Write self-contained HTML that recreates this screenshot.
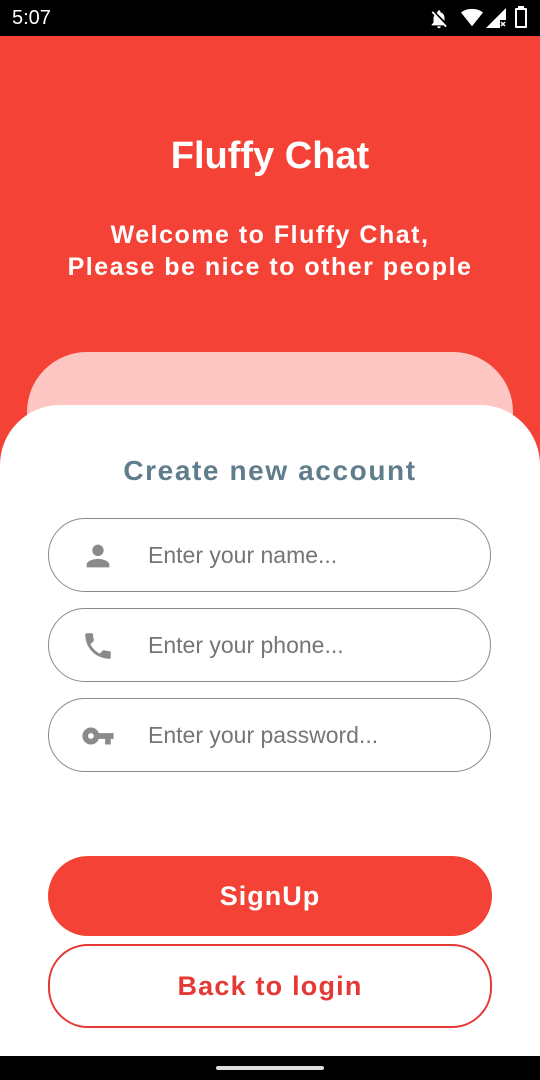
<!DOCTYPE html>
<html><head><meta charset="utf-8"><style>
*{margin:0;padding:0;box-sizing:border-box}
body{width:540px;height:1080px;position:relative;overflow:hidden;background:#f44336;font-family:"Liberation Sans",Roboto,sans-serif}
.sb{position:absolute;top:0;left:0;width:540px;height:36px;background:#000;color:#fff;font-size:20px}
.nav{position:absolute;bottom:0;left:0;width:540px;height:24px;background:#000}
.nav div{position:absolute;left:216px;top:10px;width:108px;height:4px;border-radius:2px;background:#ddd}
.t{position:absolute;width:540px;text-align:center;color:#fff}
.back{position:absolute;left:27px;top:352px;width:486px;height:200px;border-radius:60px;background:#fdc6c2}
.card{position:absolute;left:0;top:405px;width:540px;height:651px;border-radius:60px 60px 0 0;background:#fff}
.in{position:absolute;left:48px;width:443px;height:74px;border:1.3px solid #8a8a8a;border-radius:37px;color:#757575;font-size:23px;line-height:72px;padding-left:99px}
.in svg{position:absolute;left:30px;top:20px}
.btn{position:absolute;left:48px;width:444px;border-radius:40px;text-align:center;font-size:27px;font-weight:bold;letter-spacing:1px}
</style></head><body>
<div class="sb"><span style="position:absolute;left:12px;top:7px">5:07</span>
<svg style="position:absolute;left:428px;top:8px" width="22" height="22" viewBox="0 0 24 24"><path fill="#fff" d="M12 22c1.1 0 2-.9 2-2h-4c0 1.1.9 2 2 2zm6-6v-5c0-3-1.6-5.6-4.5-6.3V4c0-.8-.7-1.5-1.5-1.5S10.5 3.2 10.5 4v.7c-.5.1-1 .3-1.4.5L18 14v2zM5.4 3.5 4 4.9 7 7.9C6.4 8.8 6 9.9 6 11v5l-2 2v1h13.1l2 2 1.4-1.4z"/></svg>
<svg style="position:absolute;left:461px;top:8px" width="22" height="20" viewBox="0 0 24 20"><path fill="#fff" d="M12 19 0 4C3 1.5 7.3 0 12 0s9 1.5 12 4z"/></svg>
<svg style="position:absolute;left:486px;top:8px" width="20" height="20" viewBox="0 0 20 20"><path fill="#fff" d="M20 0v12h-6v8H0z"/><path stroke="#fff" stroke-width="1.5" d="M15 14l4 4M19 14l-4 4"/></svg>
<div style="position:absolute;left:515px;top:8px;width:12px;height:20px;border:2px solid #fff;border-radius:1px"></div>
<div style="position:absolute;left:518px;top:6px;width:6px;height:3px;background:#fff"></div>
</div>
<div class="t" style="top:135px;font-size:38px;font-weight:bold">Fluffy Chat</div>
<div class="t" style="top:219px;font-size:25px;line-height:32px;letter-spacing:1.5px;font-weight:bold">Welcome to Fluffy Chat,<br>Please be nice to other people</div>
<div class="back"></div>
<div class="card"></div>
<div class="t" style="top:455px;color:#607d8b;font-size:28px;font-weight:bold;letter-spacing:1.6px">Create new account</div>
<div class="in" style="top:518px"><svg width="38" height="34" viewBox="0 0 24 24"><path fill="#8a8a8a" d="M12 12c2.2 0 4-1.8 4-4s-1.8-4-4-4-4 1.8-4 4 1.8 4 4 4zm0 2c-2.7 0-8 1.3-8 4v2h16v-2c0-2.7-5.3-4-8-4z"/></svg>Enter your name...</div>
<div class="in" style="top:608px"><svg width="38" height="34" viewBox="0 0 24 24"><path fill="#8a8a8a" d="M6.6 10.8c1.4 2.8 3.8 5.1 6.6 6.6l2.2-2.2c.3-.3.7-.4 1-.2 1.1.4 2.3.6 3.6.6.6 0 1 .4 1 1V20c0 .6-.4 1-1 1C10.6 21 3 13.4 3 4c0-.6.4-1 1-1h3.5c.6 0 1 .4 1 1 0 1.3.2 2.5.6 3.6.1.3 0 .7-.2 1z"/></svg>Enter your phone...</div>
<div class="in" style="top:698px"><svg width="38" height="34" viewBox="0 0 24 24"><path fill="#8a8a8a" d="M12.6 10C11.8 7.7 9.6 6 7 6c-3.3 0-6 2.7-6 6s2.7 6 6 6c2.6 0 4.8-1.7 5.6-4H17v4h4v-4h2v-4zM7 14c-1.1 0-2-.9-2-2s.9-2 2-2 2 .9 2 2-.9 2-2 2z"/></svg>Enter your password...</div>
<div class="btn" style="top:856px;height:80px;line-height:80px;background:#f44336;color:#fff">SignUp</div>
<div class="btn" style="top:944px;height:84px;line-height:80px;border:2.5px solid #e53935;color:#e53935;background:#fff;letter-spacing:1.2px">Back to login</div>
<div class="nav"><div></div></div>
</body></html>
